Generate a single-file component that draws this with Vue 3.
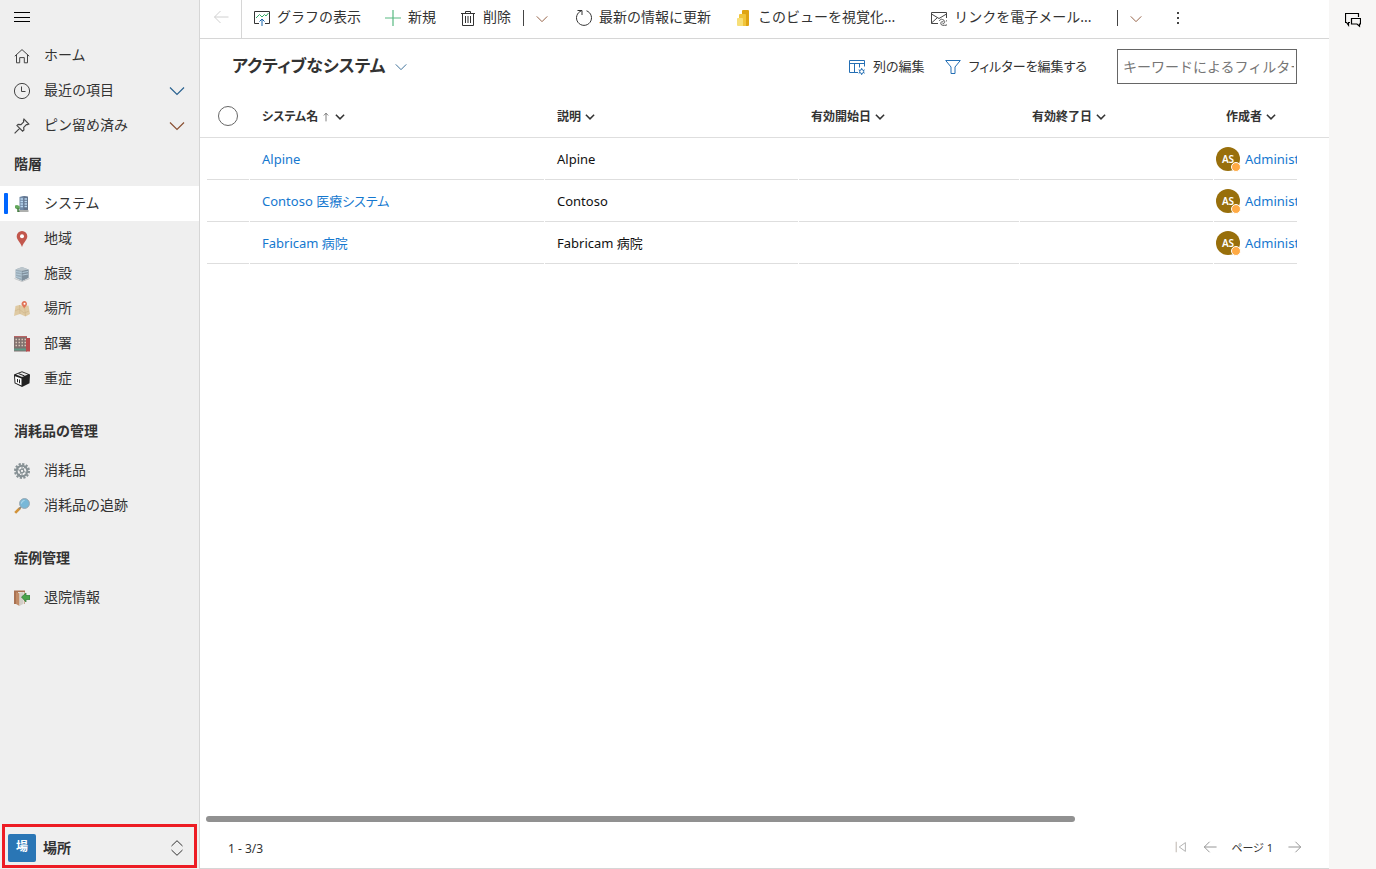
<script setup>
import { ref } from 'vue'

const icons = {
  menu: '<path d="M0 3.500h16M0 8.500h16M0 12.500h16" stroke="#000"/>',
  home: '<path d="M.8 8.200 8 1.600l7.200 6.600M2.500 6.800v8h3.200V9.600h4.600v5.200h3.200v-8" stroke="#444"/>',
  clock: '<circle cx="8" cy="8" r="7.600" stroke="#444"/><path d="M7.500 3.500v5h4" stroke="#444"/>',
  pin: '<path d="m10 1.200 4.800 4.800-1.400.7-1-.1-2.700 2.800.2 2.700-1.300 1.100L3 7.600l1.200-1.200 2.800.2 2.700-2.700-.2-1.400zM5.600 10.400.6 15.400" stroke="#444" stroke-width="1.200"/>',
  chevron: '<path d="m1 4.500 7 7 7-7" stroke="currentColor" stroke-width="1.200"/>',
  chevronBold: '<path d="m2.500 5 5.500 5.500L13.500 5" stroke="currentColor" stroke-width="2"/>',
  updown: '<path d="M2.500 6 8 .7 13.500 6M2.500 10 8 15.300l5.500-5.300" stroke="#333"/>',
  building: '<path d="M5.500 1 9 0l5 .8V15H5.500z" fill="#7189a6"/><path d="m9.500 0 4.500.8V15H9.500z" fill="#62748d"/><path d="M6.500 3H9M6.500 5.500H9M6.500 8H9M6.500 10.500H9M10.500 3H13M10.500 5.500H13M10.500 8H13M10.500 10.500H13" stroke="#b9d8f2" stroke-width="1.300"/><path d="M4 14h10.500v2H5z" fill="#aeb0ae"/><path d="M1 9.500 3 9l2.500 1 .5 2.500-1.500 1-2-.5L1 12z" fill="#64a85c"/><path d="M4 12v3.500h1.500" stroke="#477d43" stroke-width="1.500"/>',
  place: '<path d="M8 0a5.300 5.300 0 0 0-5.300 5.300C2.700 9 6 10.500 8 16c2-5.500 5.300-7 5.300-10.700A5.300 5.300 0 0 0 8 0z" fill="#c2574d"/><circle cx="8" cy="5.200" r="2" fill="#fff"/>',
  facility: '<path d="M1.500 3.500 8 1l6.500 2.500v8.300L8 15l-6.500-3.200z" fill="#9badb9"/><path d="m8 4.500 6.500-1v8.300L8 15z" fill="#80909d"/><path d="M1.500 3.500 8 1l6.500 2.500L8 4.700z" fill="#bcc6cc"/><path d="m2 5.500 5.500 1M2 8l5.500 1M2 10.500l5.500 1.500M8.500 6.500l5.500-1M8.500 9l5.500-1" stroke="#b5cbd9"/><path d="M.5 12.500 8 15.500l7.500-3" stroke="#c2c5c7"/>',
  map: '<path d="m1.500 5 4-1 5 1 4-.5L16 13l-4.500 2.500L6 13l-6 2z" fill="#dfcaa3"/><path d="m5.500 4 .5 9M10.500 5l1 10M1 10l4-2 5 4 5-2" stroke="#d0b68b" stroke-width=".7"/><path d="M10.500 0C8.500 0 7.500 1.500 7.500 3c0 1.500 2 2 2.500 4.500 1-2 3-2.500 3-4.500 0-1.500-1-3-2.500-3z" fill="#e17458"/><circle cx="10.500" cy="2.700" r="1" fill="#fff"/>',
  department: '<path d="M0 .5h13v15H0z" fill="#80706e"/><path d="M12 2h4v13.500h-4z" fill="#b84b4d"/><path d="M1.500 3.500H12M1.500 6.500H12M1.500 9.500H12" stroke="#d9c6b9" stroke-width="1.600" stroke-dasharray="1.500 1.500"/><path d="M0 13.500h12" stroke="#5e9a88" stroke-width="2"/><path d="M0 .7h13" stroke="#b95555"/>',
  cube: '<path d="m0 3.500 8-3.300 8 3.300-.5 8.700L8 16 .5 12.200z" fill="#222"/><path d="M1 5.200 7.500 7.500v7L1.500 11.700z" fill="#fff"/><path d="m2 3.600 6-2.300 6 2.300-6 2.300z" fill="#e8e8e8"/><path d="m4.500 2.600 6 2.300M3.500 8v3.200M5.500 8.500v3.700" stroke="#222"/>',
  gear: '<circle cx="8" cy="8" r="5.300" stroke="#869094" stroke-width="2"/><circle cx="8" cy="8" r="7" stroke="#869094" stroke-width="2" stroke-dasharray="2.200 1.465"/><circle cx="8" cy="8" r="1.800" stroke="#869094" stroke-width="1.300"/><path d="M8 2.500v4M8 9.500v4M2.800 6.300l3.600 1.200M9.600 8.500l3.600 1.200M4.700 12.500l2.400-3.200M8.900 6.700l2.400-3.200" stroke="#869094"/>',
  lens: '<path d="m1.200 14.800 5-5" stroke="#d29339" stroke-width="2.600"/><path d="m5 11 2-2" stroke="#888" stroke-width="1.500"/><circle cx="10.500" cy="5.500" r="4.900" fill="#78b8d8" stroke="#96a5af"/><path d="M7.500 5.500a3 3 0 0 1 3-3" stroke="#b9dff0"/>',
  exit: '<path d="M0 .5h11V14H0z" fill="#a97252"/><path d="M4 2h6.500v12H4z" fill="#e4ded5"/><path d="m2 2 3.500 1.500V16L2 14z" fill="#c18b66"/><path d="M5.500 3.500V16L9 14V2z" fill="#d2cec8"/><path d="m7.500 7 4.500-4v2.500h4v4h-4V12z" fill="#49a44b" stroke="#2b7833" stroke-width=".7"/>',
  back: '<path d="M15.500 8H1.500M7.500 2l-6 6 6 6" stroke="currentColor"/>',
  forward: '<path d="M.5 8h14M8.500 2l6 6-6 6" stroke="currentColor"/>',
  chart: '<path d="M5 13.500H.5v-12h15v12H11" stroke="#333"/><path d="m2 8 3.500-3.500L8 7l2.500-2.500 1.500 1.500 2.500-3" stroke="#35a967"/><path d="M8 16V9M5.500 11.500 8 9l2.500 2.500" stroke="#1764ab"/>',
  plus: '<path d="M8 0v16M0 8h16" stroke="#58b981" stroke-width="1.200"/>',
  trash: '<path d="M1 3.500h14M5.500 3V1.500h5V3M2.500 3.500v12h11v-12M5.500 6v7M8 6v7m2.500-7v7" stroke="#333"/>',
  refresh: '<path d="M10.500.8a7.500 7.500 0 1 1-5 0M1.500.5H6V5" stroke="#333"/>',
  powerbi: '<path d="M8 0h5a1 1 0 0 1 1 1v14a1 1 0 0 1-1 1H7V1a1 1 0 0 1 1-1z" fill="#dfa414"/><path d="M5 4h5a1 1 0 0 1 1 1v11H4V5a1 1 0 0 1 1-1z" fill="#f1c53c"/><path d="M2.500 8H7a1 1 0 0 1 1 1v7H3a1 1 0 0 1-1-1V8.500z" fill="#f7df78"/>',
  mail: '<path d="M7 13.500H.5v-11h15V8M.5 4l7.500 4.500L15.500 4M.5 13 6 8" stroke="#444"/><path d="M8.500 11a2 2 0 0 1 3-1.500l1.500.8a2 2 0 0 1-1.500 3.500M15 10.500a2.300 2.300 0 0 1-1.500 4.800h-2a2 2 0 0 1-1-3.500h2" stroke="#555"/>',
  columns: '<path d="M9 13.500H.5v-12h15v6M.5 4.500h15M5.500 4.500v9m5-9v4" stroke="#246fb4"/><circle cx="12.700" cy="12.500" r="2" stroke="#246fb4"/><path d="M12.700 9v1.500m0 4V16M9.700 10.800l1.300.7m3.400 2 1.300.7m-6 0 1.300-.7m3.400-2 1.300-.7" stroke="#246fb4"/>',
  funnel: '<path d="M.7 1.500h14.600L10 8v6.500H6V8z" stroke="#246fb4"/>',
  first: '<path d="M2.500 2v12" stroke="#b4aaa4"/><path d="M13 3v10L6 8z" stroke="#a8a8a8"/>',
  more: '<path d="M7 2h2v2H7zM7 7h2v2H7zM7 12h2v2H7z" fill="#444"/>',
  chat: '<path d="M5 10.500H3.500v2.700L1.500 10.500h-1v-9h13v3.500M6.500 6.500h9v5.500h-1v2.200L12 12H6.500z" stroke="#000" stroke-width="1.200"/>',
  sort: '<path d="M8 15V2M4.500 5.500 8 2l3.500 3.500" stroke="#333"/>'
}

const home = [
  { label: 'ホーム', icon: 'home' },
  { label: '最近の項目', icon: 'clock', tone: 'blue' },
  { label: 'ピン留め済み', icon: 'pin', tone: 'brown' }
]
const groups = [
  {
    title: '階層',
    items: [
      { label: 'システム', icon: 'building', active: true },
      { label: '地域', icon: 'place' },
      { label: '施設', icon: 'facility' },
      { label: '場所', icon: 'map' },
      { label: '部署', icon: 'department' },
      { label: '重症', icon: 'cube' }
    ]
  },
  {
    title: '消耗品の管理',
    items: [
      { label: '消耗品', icon: 'gear' },
      { label: '消耗品の追跡', icon: 'lens' }
    ]
  },
  { title: '症例管理', items: [{ label: '退院情報', icon: 'exit' }] }
]
const headers = [
  { label: 'システム名', key: 'name', sorted: true },
  { label: '説明', key: 'desc' },
  { label: '有効開始日', key: 'from' },
  { label: '有効終了日', key: 'to' },
  { label: '作成者', key: 'owner' }
]
const rows = [
  { name: 'Alpine', desc: 'Alpine' },
  { name: 'Contoso 医療システム', desc: 'Contoso' },
  { name: 'Fabricam 病院', desc: 'Fabricam 病院' }
]
const keyword = ref('')
</script>

<template>
  <div class="app">
    <aside class="sidebar">
      <button class="hamburger" aria-label="メニュー">
        <svg class="icon" viewBox="0 0 16 16" v-html="icons.menu"></svg>
      </button>
      <nav class="nav">
        <a v-for="item in home" :key="item.label" class="nav-item" href="#">
          <svg class="icon" viewBox="0 0 16 16" v-html="icons[item.icon]"></svg>
          <span class="nav-label">{{ item.label }}</span>
          <svg v-if="item.tone" class="icon" :class="item.tone" viewBox="0 0 16 16" v-html="icons.chevron"></svg>
        </a>
        <section v-for="group in groups" :key="group.title" class="group">
          <h2 class="group-title">{{ group.title }}</h2>
          <a v-for="item in group.items" :key="item.label" class="nav-item" :class="{ active: item.active }" href="#">
            <svg class="icon" viewBox="0 0 16 16" v-html="icons[item.icon]"></svg>
            <span class="nav-label">{{ item.label }}</span>
          </a>
        </section>
      </nav>
      <div class="area">
        <button class="area-switch">
          <span class="area-badge">場</span>
          <span class="area-label">場所</span>
          <svg class="icon" viewBox="0 0 16 16" v-html="icons.updown"></svg>
        </button>
      </div>
    </aside>

    <main class="main">
      <div class="commands">
        <button class="back" aria-label="戻る"><svg class="icon" viewBox="0 0 16 16" v-html="icons.back"></svg></button>
        <button class="command"><svg class="icon" viewBox="0 0 16 16" v-html="icons.chart"></svg><span>グラフの表示</span></button>
        <button class="command"><svg class="icon" viewBox="0 0 16 16" v-html="icons.plus"></svg><span>新規</span></button>
        <button class="command"><svg class="icon" viewBox="0 0 16 16" v-html="icons.trash"></svg><span>削除</span></button>
        <span class="separator"></span>
        <button class="split brown" aria-label="削除のオプション"><svg class="icon small" viewBox="0 0 16 16" v-html="icons.chevron"></svg></button>
        <button class="command"><svg class="icon" viewBox="0 0 16 16" v-html="icons.refresh"></svg><span>最新の情報に更新</span></button>
        <button class="command"><svg class="icon" viewBox="0 0 16 16" v-html="icons.powerbi"></svg><span>このビューを視覚化...</span></button>
        <button class="command mail"><svg class="icon" viewBox="0 0 16 16" v-html="icons.mail"></svg><span>リンクを電子メール...</span></button>
        <span class="separator"></span>
        <button class="split brown" aria-label="リンクのオプション"><svg class="icon small" viewBox="0 0 16 16" v-html="icons.chevron"></svg></button>
        <button class="command" aria-label="その他"><svg class="icon" viewBox="0 0 16 16" v-html="icons.more"></svg></button>
      </div>

      <header class="view-head">
        <button class="view-title">
          <h1>アクティブなシステム</h1>
          <svg class="icon small blue" viewBox="0 0 16 16" v-html="icons.chevron"></svg>
        </button>
        <div class="tools">
          <button class="tool"><svg class="icon" viewBox="0 0 16 16" v-html="icons.columns"></svg><span>列の編集</span></button>
          <button class="tool"><svg class="icon" viewBox="0 0 16 16" v-html="icons.funnel"></svg><span>フィルターを編集する</span></button>
        </div>
        <input v-model="keyword" class="search" type="text" aria-label="キーワードによるフィルター" placeholder="キーワードによるフィルター">
      </header>

      <div class="grid">
        <table>
          <thead>
            <tr>
              <th class="col-check"><input class="check" type="checkbox" aria-label="すべて選択"></th>
              <th v-for="head in headers" :key="head.key" :class="'col-' + head.key">
                <button class="head">
                  {{ head.label }}
                  <svg v-if="head.sorted" class="icon sort" viewBox="0 0 16 16" v-html="icons.sort"></svg>
                  <svg class="icon small" viewBox="0 0 16 16" v-html="icons.chevronBold"></svg>
                </button>
              </th>
            </tr>
          </thead>
          <tbody>
            <tr v-for="row in rows" :key="row.name">
              <td class="col-check"><div class="cell"></div></td>
              <td><div class="cell"><a href="#">{{ row.name }}</a></div></td>
              <td><div class="cell">{{ row.desc }}</div></td>
              <td><div class="cell"></div></td>
              <td><div class="cell"></div></td>
              <td class="col-owner">
                <div class="cell owner">
                  <span class="avatar">AS<i class="presence"></i></span>
                  <a href="#">Administr</a>
                </div>
              </td>
            </tr>
          </tbody>
        </table>
      </div>
      <div class="scroll"><div class="thumb"></div></div>
      <footer class="footer">
        <span class="count">1 - 3/3</span>
        <button class="page" aria-label="最初のページ"><svg class="icon" viewBox="0 0 16 16" v-html="icons.first"></svg></button>
        <button class="page" aria-label="前のページ"><svg class="icon" viewBox="0 0 16 16" v-html="icons.back"></svg></button>
        <span class="page-label">ページ 1</span>
        <button class="page" aria-label="次のページ"><svg class="icon" viewBox="0 0 16 16" v-html="icons.forward"></svg></button>
      </footer>
    </main>

    <aside class="rail">
      <button aria-label="チャット"><svg class="icon" viewBox="0 0 16 16" v-html="icons.chat"></svg></button>
    </aside>
  </div>
</template>

<style>
body {
  margin: 0;
  background: #fff;
}
</style>

<style scoped>
.app {
  display: grid;
  grid-template-columns: 200px minmax(0, 1fr) 47px;
  min-height: 100vh;
  font-family: "Noto Sans", "Noto Sans CJK JP", sans-serif;
  font-size: 14px;
  line-height: 20px;
  color: #333;
}
button {
  display: flex;
  align-items: center;
  margin: 0;
  padding: 0;
  border: 0;
  background: none;
  font: inherit;
  color: inherit;
  white-space: nowrap;
}
a {
  color: #1578cf;
  text-decoration: none;
}
.icon {
  flex: none;
  width: 16px;
  height: 16px;
  fill: none;
}
.icon.small {
  width: 12px;
  height: 12px;
}
.blue {
  color: #2a6290;
}
.brown {
  color: #8a5032;
}

.sidebar {
  display: flex;
  flex-direction: column;
  background: #efefef;
  border-right: 1px solid #d6d6d6;
}
.hamburger {
  height: 38px;
  padding: 0 14px 4px;
}
.nav {
  flex: 1;
}
.nav-item {
  display: flex;
  align-items: center;
  gap: 14px;
  height: 35px;
  padding: 0 14px;
  color: #333;
}
.nav-label {
  flex: 1;
  padding-bottom: 2px;
}
.nav-item.active {
  position: relative;
  background: #fff;
}
.nav-item.active::before {
  content: "";
  position: absolute;
  left: 4px;
  top: 7px;
  bottom: 7px;
  width: 4px;
  border-radius: 1px;
  background: #0066ff;
}
.group + .group {
  margin-top: 14px;
}
.group-title {
  margin: 0;
  padding: 11px 14px 12px;
  font-size: 14px;
  line-height: 20px;
  font-weight: 700;
}
.area {
  padding: 0 2px 1px;
}
.area-switch {
  width: 100%;
  height: 44px;
  padding: 4px 9px 0 3px;
  gap: 7px;
  border: 3px solid #ed1c24;
  font-weight: 700;
}
.area-label {
  flex: 1;
  text-align: left;
}
.area-badge {
  flex: none;
  width: 28px;
  height: 28px;
  border-radius: 2px;
  background: #2a76b5;
  color: #fff;
  font-size: 12px;
  line-height: 26px;
}

.main {
  display: flex;
  flex-direction: column;
  border-bottom: 1px solid #d6d6d6;
}
.commands {
  display: flex;
  align-items: center;
  height: 38px;
  border-bottom: 1px solid #d6d6d6;
}
.back {
  align-self: stretch;
  padding: 0 12px 4px 13px;
  border-right: 1px solid #d6d6d6;
  color: #d0d0d0;
}
.command {
  gap: 7px;
  padding: 0 12px 2px;
}
.command span,
.tool span {
  padding-bottom: 2px;
}
.separator {
  width: 1px;
  height: 16px;
  margin-bottom: 3px;
  background: #444;
}
.split {
  padding: 0 16px 0 12px;
}
.mail {
  margin: 0 13px 0 12px;
}
.view-head {
  display: flex;
  align-items: center;
  height: 55px;
  padding: 0 32px 2px;
}
.view-title {
  gap: 9px;
  margin-right: auto;
}
.view-title h1 {
  margin: 0;
  padding-bottom: 2px;
  font-size: 17px;
  line-height: 28px;
  font-weight: 700;
  font-feature-settings: "palt";
}
.tools {
  display: flex;
  gap: 20px;
  margin-right: 30px;
}
.tool {
  gap: 8px;
  font-size: 13px;
  font-feature-settings: "palt";
}
.search {
  box-sizing: border-box;
  width: 180px;
  height: 35px;
  padding: 0 2px 0 5px;
  border: 1px solid #666;
  font: inherit;
  color: #333;
}
.search::placeholder {
  color: #767676;
}

.grid {
  flex: 1;
}
table {
  width: 100%;
  table-layout: fixed;
  border-collapse: separate;
  border-spacing: 0;
}
th {
  height: 41px;
  padding: 0 0 0 12px;
  border-bottom: 1px solid #dedede;
  text-align: left;
}
.head {
  gap: 3px;
  font-size: 12px;
  font-weight: 600;
  font-feature-settings: "palt";
}
.icon.sort {
  width: 10px;
  height: 14px;
}
.col-check { width: 50px; }
.col-name { width: 283px; }
.col-from { width: 209px; }
.col-to { width: 182px; }
.col-owner { width: 103px; }
th.col-check {
  width: 32px;
  height: 39px;
  padding: 0 0 2px 18px;
}
.check {
  display: block;
  appearance: none;
  box-sizing: border-box;
  width: 20px;
  height: 20px;
  margin: 0;
  border: 1px solid #666;
  border-radius: 50%;
}
td {
  padding: 0 1px 0 0;
}
td.col-check {
  padding-left: 7px;
}
td.col-owner {
  padding-right: 32px;
}
.cell {
  box-sizing: border-box;
  height: 42px;
  padding-left: 12px;
  border-bottom: 1px solid #dedede;
  overflow: hidden;
  white-space: nowrap;
  font-size: 13px;
  line-height: 42px;
  color: #111;
  font-feature-settings: "palt";
}
.owner {
  display: flex;
  align-items: center;
  gap: 5px;
  padding-left: 2px;
}
.avatar {
  position: relative;
  flex: none;
  width: 24px;
  height: 24px;
  border-radius: 50%;
  background: #986f0b;
  color: #fff;
  font-size: 10px;
  line-height: 24px;
  font-weight: 600;
  text-align: center;
}
.presence {
  position: absolute;
  right: -1px;
  bottom: -1px;
  width: 8px;
  height: 8px;
  border: 1px solid #fff;
  border-radius: 50%;
  background: #ffaa44;
}
.scroll {
  padding: 0 37px 0 6px;
}
.thumb {
  width: 80%;
  height: 6px;
  border-radius: 3px;
  background: #919191;
}
.footer {
  display: flex;
  align-items: center;
  height: 46px;
  padding: 0 27px 0 28px;
  font-size: 12px;
}
.count {
  margin-right: auto;
  padding-top: 8px;
}
.page {
  color: #888;
  margin-left: 15px;
  padding-top: 4px;
}
.page .icon {
  width: 14px;
  height: 14px;
}
.page-label {
  margin-left: 14px;
  padding-top: 6px;
  font-size: 11px;
  font-feature-settings: "palt";
}
.rail {
  background: #f7f6f5;
}
.rail button {
  padding: 12px 16px;
}
</style>
